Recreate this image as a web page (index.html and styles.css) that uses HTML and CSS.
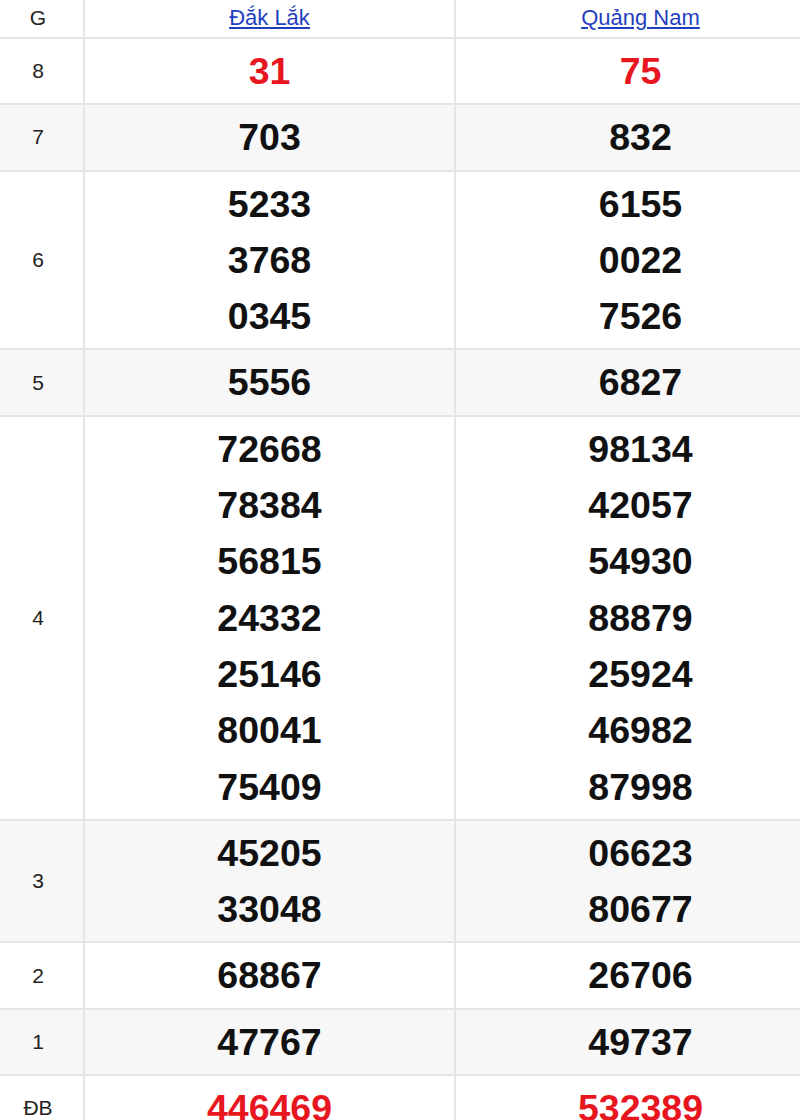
FILE: index.html
```html
<!DOCTYPE html>
<html lang="vi">
<head>
<meta charset="utf-8">
<title>Kết quả xổ số</title>
<link rel="stylesheet" href="styles.css">
</head>
<body>
<div class="wrap">
<table class="kq">
  <colgroup><col class="c-g"><col class="c-p"><col class="c-p"></colgroup>
  <thead>
    <tr><th class="lbl">G</th><th><a href="#">Đắk Lắk</a></th><th><a href="#">Quảng Nam</a></th></tr>
  </thead>
  <tbody>
    <tr><td class="lbl">8</td><td class="num red"><div>31</div></td><td class="num red"><div>75</div></td></tr>
    <tr class="alt"><td class="lbl">7</td><td class="num"><div>703</div></td><td class="num"><div>832</div></td></tr>
    <tr><td class="lbl">6</td><td class="num"><div>5233</div><div>3768</div><div>0345</div></td><td class="num"><div>6155</div><div>0022</div><div>7526</div></td></tr>
    <tr class="alt"><td class="lbl">5</td><td class="num"><div>5556</div></td><td class="num"><div>6827</div></td></tr>
    <tr><td class="lbl">4</td><td class="num"><div>72668</div><div>78384</div><div>56815</div><div>24332</div><div>25146</div><div>80041</div><div>75409</div></td><td class="num"><div>98134</div><div>42057</div><div>54930</div><div>88879</div><div>25924</div><div>46982</div><div>87998</div></td></tr>
    <tr class="alt"><td class="lbl">3</td><td class="num"><div>45205</div><div>33048</div></td><td class="num"><div>06623</div><div>80677</div></td></tr>
    <tr><td class="lbl">2</td><td class="num"><div>68867</div></td><td class="num"><div>26706</div></td></tr>
    <tr class="alt"><td class="lbl">1</td><td class="num"><div>47767</div></td><td class="num"><div>49737</div></td></tr>
    <tr><td class="lbl">ĐB</td><td class="num red"><div>446469</div></td><td class="num red"><div>532389</div></td></tr>
  </tbody>
</table>
</div>
</body>
</html>
```
FILE: styles.css
```css
html, body {
  margin: 0;
  padding: 0;
  background: #fff;
  overflow: hidden;
}
.wrap {
  width: 800px;
  overflow: hidden;
}
.kq {
  width: 827px;
  border-collapse: collapse;
  table-layout: fixed;
  font-family: "Liberation Sans", Arial, sans-serif;
  color: #222;
}
.c-g { width: 84px; }
.c-p { width: 371px; }
.kq th, .kq td {
  border: 2px solid #e4e4e9;
  text-align: center;
  vertical-align: middle;
  padding: 4px 0;
}
.kq tr:first-child th { border-top: none; }
.kq th:first-child, .kq td:first-child { border-left: none; }
.kq th {
  font-weight: normal;
  font-size: 22px;
  line-height: 28px;
  padding: 4px 0 5px;
}
.kq th a {
  color: #1f3fbf;
  text-decoration: underline;
  text-underline-offset: 2px;
}
.kq .lbl {
  font-size: 21px;
  color: #222;
  padding-right: 7px;
}
.alt { background: #f7f7f7; }
.num {
  font-size: 37.5px;
  font-weight: bold;
  color: #111;
}
.num div { line-height: 56.3px; }
.num.red { color: #e8171f; }
```
